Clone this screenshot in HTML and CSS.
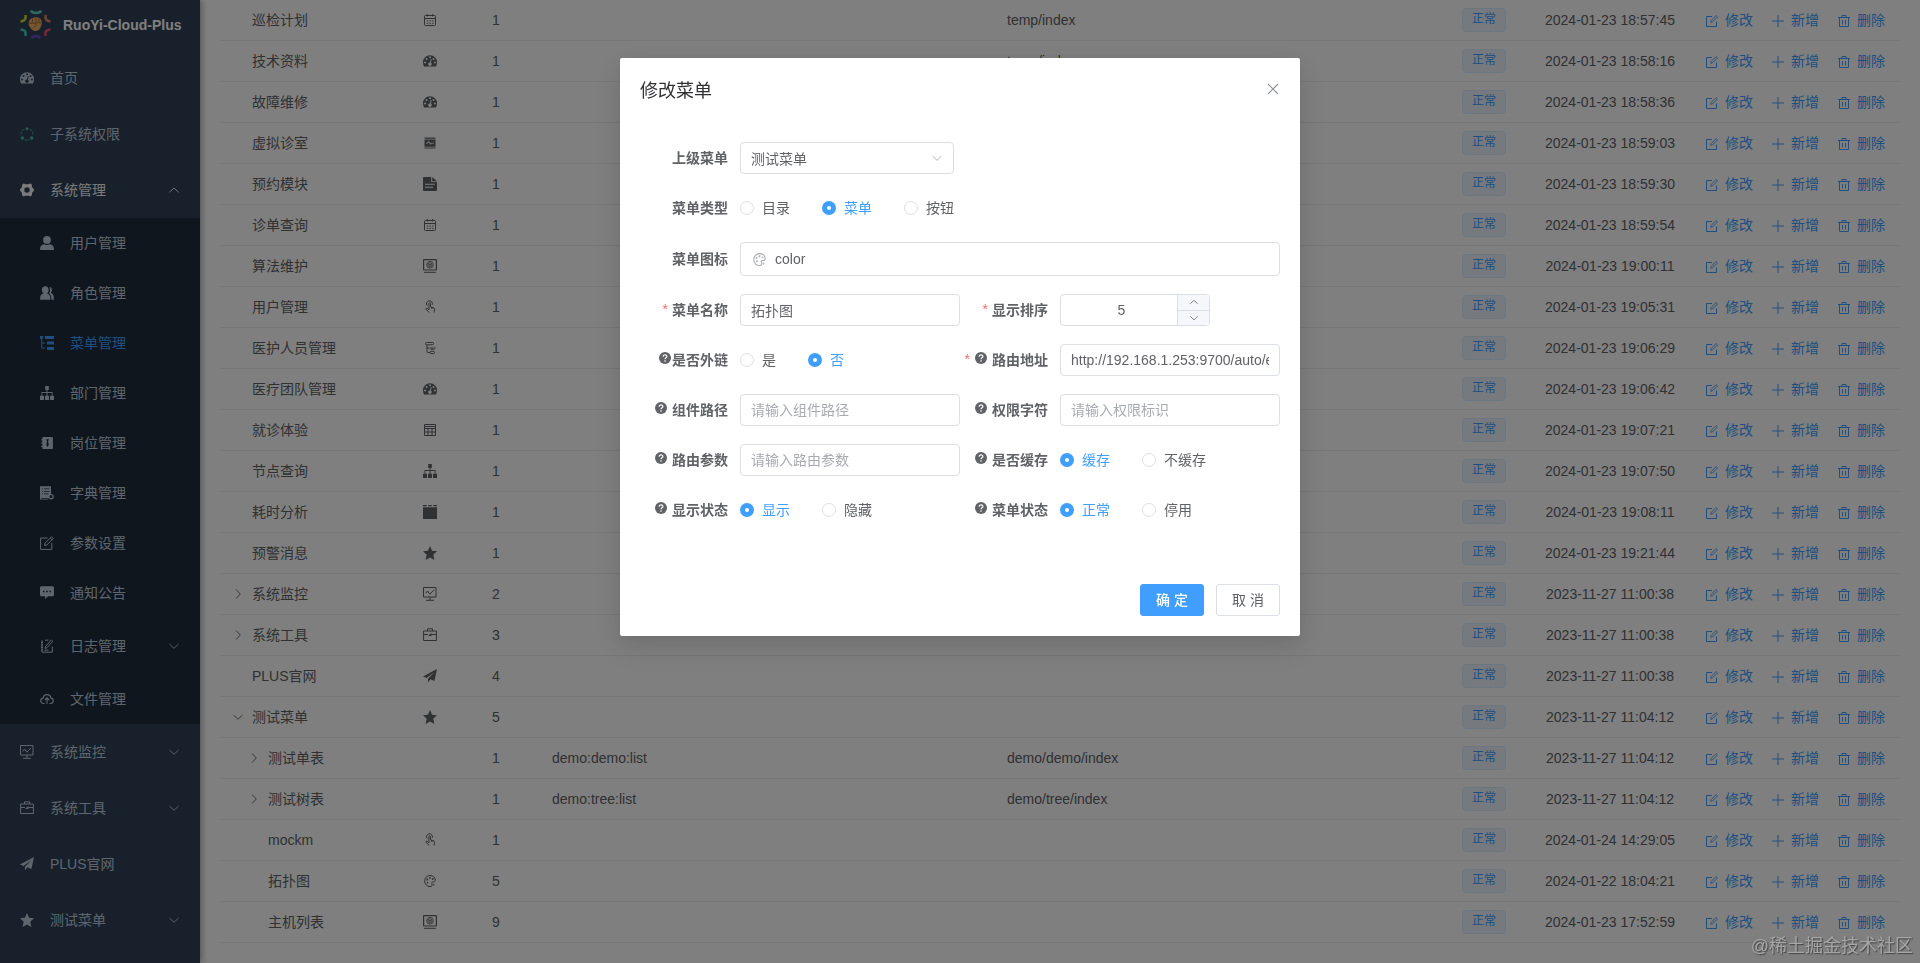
FILE: index.html
```html
<!DOCTYPE html>
<html lang="zh-CN">

<head>
    <meta charset="utf-8">
    <meta name="viewport" content="width=device-width, initial-scale=1.0">
    <title>RuoYi-Cloud-Plus</title>
    <link rel="stylesheet" href="styles.css">
</head>

<body>

    <!-- icons -->
    <svg class="sprite">
        <symbol id="i-dashboard" viewBox="0 0 14 14"><path fill="currentColor" fill-rule="evenodd" d="M7 1.3a7 7 0 0 0-7 7c0 1.600.4 2.900 1 4.100h12c.6-1.200 1-2.500 1-4.100a7 7 0 0 0-7-7zM3.600 3.900a1 1 0 1 1 0 2 1 1 0 0 1 0-2zM7 2.300a1 1 0 1 1 0 2 1 1 0 0 1 0-2zM2.100 7.500a1 1 0 1 1 0 2 1 1 0 0 1 0-2zM11.900 7.500a1 1 0 1 1 0 2 1 1 0 0 1 0-2zM10.500 3.900a1 1 0 1 1 0 2 1 1 0 0 1 0-2zM7.800 5l.9.200-.8 3.500a1.700 1.700 0 1 1-1-.3z"/></symbol>
        <symbol id="i-ring" viewBox="0 0 14 14"><g fill="none" stroke="#4fb9a0"><path d="M4.200 2.200A6 6 0 0 0 1 8.200M9.800 2.200A6 6 0 0 1 13 8.200M4.600 12.700a6 6 0 0 0 4.800 0" stroke-dasharray="2.500 .8"/></g><g fill="#4fb9a0"><circle cx="7" cy="1.700" r="1.500"/><circle cx="2.300" cy="11" r="1.700"/><circle cx="11.700" cy="11" r="1.700"/></g></symbol>
        <symbol id="i-system" viewBox="0 0 14 14"><path fill="currentColor" fill-rule="evenodd" d="M3.300.7c.9-.5 1.600.5 2.400.5h2.600c.8 0 1.500-1 2.400-.5.9.5 1.500 1 1.300 2.200-.1.800 0 1.200.5 1.900.6.700 1.500 1 1.500 2.200s-.9 1.500-1.500 2.200c-.5.700-.6 1.100-.5 1.900.2 1.200-.4 1.700-1.300 2.200-.9.500-1.600-.5-2.400-.5H5.700c-.8 0-1.500 1-2.400.5C2.400 12.800 1.800 12.300 2 11.100c.1-.8 0-1.200-.5-1.900C.9 8.500 0 8.200 0 7s.9-1.500 1.500-2.200C2 4.100 2.100 3.700 2 2.900 1.800 1.700 2.400 1.200 3.300.7zM7 4.300a2.700 2.700 0 1 0 0 5.400 2.700 2.700 0 0 0 0-5.400z"/></symbol>
        <symbol id="i-user" viewBox="0 0 14 14"><path fill="currentColor" d="M7 0a3.800 3.800 0 0 1 0 7.800A3.800 3.800 0 0 1 7 0zM0 13.500c0-3.200 1.500-5 4.200-5.200 1.800 1 3.800 1 5.600 0 2.700.2 4.200 2 4.200 5.200 0 .3-.2.500-.5.500H.5a.5.5 0 0 1-.5-.5z"/></symbol>
        <symbol id="i-peoples" viewBox="0 0 14 14"><path fill="currentColor" d="M5.300.2c2 0 3.400 1.600 3.400 3.600 0 1.400-.7 2.900-1.700 3.700 2 .6 3.300 2 3.300 4v2.200H.2v-2.300c0-2 1.200-3.400 3.300-3.900C2.500 6.700 1.800 5.200 1.800 3.800 1.800 1.800 3.300.2 5.300.2zM9.400 1.100c1.600 0 2.500 1.200 2.500 2.700 0 1.200-.4 2.300-1.200 3 1.900.8 3.100 2.600 3.100 4.600v2.300h-2.500v-2.300c0-1.800-.8-3.200-2.200-4 1.200-1.800 1.400-4.400.3-6.300z"/></symbol>
        <symbol id="i-treetable" viewBox="0 0 14 14"><path fill="currentColor" d="M0 0h3.200v2.800H2.200v3.700h3v1h-3v4h3v1H1.200V2.800H0zM5 0h9v2.900H5zM7 5.500h7v3H7zM7 11h7v3H7z"/></symbol>
        <symbol id="i-tree" viewBox="0 0 14 14"><path fill="currentColor" d="M5.200 0h3.600v4H7.500v2h5v3.800H14V14h-4V9.800h1.700V6.900H7.500v2.900H9V14H5V9.800h1.500V6.900H2.300v2.900H4V14H0V9.800h1.500V6h5V4H5.200z"/></symbol>
        <symbol id="i-post" viewBox="0 0 14 14"><path fill="currentColor" fill-rule="evenodd" d="M3.500 1h8.300c.6 0 1.100.5 1.100 1.100v9.800c0 .6-.5 1.100-1.100 1.100H3.500c-.7 0-1.200-.5-1.200-1.100v-1H1.200v-1h1.100V7.500H1.200v-1h1.100V4.200H1.200v-1h1.100V2.100C2.300 1.500 2.800 1 3.500 1zM6.300 3.200v1l.8.500-.8 4.400L7.500 11l1.300-1.900L8 4.700l.8-.5v-1z"/></symbol>
        <symbol id="i-dict" viewBox="0 0 14 14"><path fill="currentColor" fill-rule="evenodd" d="M0 .3h11v7.600c1.600 0 2.900 1.200 2.900 2.800s-1.300 2.700-2.900 2.700c-1 0-1.800-.4-2.300-1.100H1.200v.6h7v.7H0zM2 2.500v.8h1v-.8zM4 2.500v.8h5.500v-.8zM2 5v.8h1V5zM4 5v.8h5.500V5zM2 7.500v.8h1v-.8zM4 7.500v.8h4.500v-.8zM11 9a1.600 1.600 0 1 0 0 3.200A1.600 1.600 0 0 0 11 9z"/></symbol>
        <symbol id="i-edit" viewBox="0 0 14 14"><g fill="none" stroke="currentColor"><path d="M7.500 2H.6v11.400h11.200V7"/><path d="M4.500 9.600l.6-2.600L11.500.8l1.800 1.700L7 8.900zM10.300 2l1.800 1.700"/></g></symbol>
        <symbol id="i-message" viewBox="0 0 14 14"><path fill="currentColor" fill-rule="evenodd" d="M1.500.2h11c.8 0 1.500.6 1.500 1.500v7.100c0 .9-.7 1.500-1.500 1.500H8l-2.800 3v-3H1.500C.7 10.300 0 9.700 0 8.800V1.700C0 .8.700.2 1.500.2zM3 4.800v1.400h1.500V4.800zM6.300 4.800v1.400h1.500V4.800zM9.500 4.800v1.400H11V4.800z"/></symbol>
        <symbol id="i-log" viewBox="0 0 14 14"><g fill="none" stroke="currentColor"><path d="M8.500 1.200H5M2 1.200v12h10.300V7.500" /><path d="M5 9.500l.5-2L11.300 1l1.500 1.300L7 8.700zM4.500 11.200h4"/><path d="M1 3.500h2M1 6h2M1 8.500h2M1 11h2"/></g></symbol>
        <symbol id="i-upload" viewBox="0 0 14 14"><g fill="none" stroke="currentColor" stroke-width="1.100"><path d="M4.500 11.500H3.600C1.900 11.500.7 10.300.7 8.800.7 7.400 1.700 6.300 3.100 6.100 3.400 3.900 5 2.600 7 2.600s3.600 1.300 3.900 3.500c1.400.2 2.400 1.300 2.400 2.700 0 1.500-1.200 2.700-2.900 2.700h-.9"/><path d="M7 11.800V6M4.800 8L7 5.800 9.200 8"/></g></symbol>
        <symbol id="i-monitor" viewBox="0 0 14 14"><g fill="none" stroke="currentColor"><path d="M.5.500h12.500v9.500H.5zM7 10v3M3 13.300h8M2.800 6.300L4.500 4l2.300 3.200L11 2.800"/></g></symbol>
        <symbol id="i-tool" viewBox="0 0 14 14"><g fill="none" stroke="currentColor"><path d="M.6 3h12.800v9.500H.6zM4.500 3V.8h5V3M.6 6.500H5M9 6.500h4.400M5.500 7.800l2.700-2M8.300 5.500v2H6"/></g></symbol>
        <symbol id="i-guide" viewBox="0 0 14 14"><path fill="currentColor" d="M14 0l-2.600 12-4-1.800L5 13.300V9.800L11.500 3 3.600 9 0 7.500zM5.500 11l1 .5-.9 1.200z"/></symbol>
        <symbol id="i-star" viewBox="0 0 14 14"><path fill="currentColor" d="M7 0l2.100 4.700 4.900.6-3.700 3.400L11.400 14 7 11.400 2.600 14l1.100-5.300L0 5.300l4.900-.6z"/></symbol>
        <symbol id="i-date" viewBox="0 0 14 14"><g fill="none" stroke="currentColor"><rect x="1.500" y="2.500" width="11" height="10" rx="1"/><path d="M1.500 5.500h11M4.300 1v2.500M9.700 1v2.500"/><path d="M3.800 8h7M3.800 10.300h7" stroke-dasharray="1.400 1.300"/></g></symbol>
        <symbol id="i-druid" viewBox="0 0 14 14"><path fill="currentColor" fill-rule="evenodd" d="M1.500 1.500h11v1.200h-11zM1.500 3.500h11v7.300h-11zM1.500 11.500h11v1h-11zM3 6.800v.8h1.600l1.200-1.200 1.900 2.300 1.300-1.200h2v-.8H8.700l-.9.800-2-2.500-1.500 1.800z"/></symbol>
        <symbol id="i-doc" viewBox="0 0 14 14"><path fill="currentColor" fill-rule="evenodd" d="M1 0h7.200v5H14v8c0 .6-.4 1-1 1H1c-.6 0-1-.4-1-1V1c0-.6.4-1 1-1zM9.200.1L14 4.200H9.200zM2 6.800v1h9.800v-1zM2 9.800v1h8v-1z"/></symbol>
        <symbol id="i-server" viewBox="0 0 14 14"><g fill="none" stroke="currentColor"><rect x=".6" y=".6" width="12.800" height="10.400" rx=".5" stroke-width="1.200"/><circle cx="7" cy="5.800" r="3.400" stroke-width=".8"/><path stroke-width=".8" d="M7 3.500l2 1.200v2.200L7 8.100 5 6.900V4.700zM5 4.700l2 1.200 2-1.200M7 5.900v2.200"/><path d="M1 13.300h12"/></g></symbol>
        <symbol id="i-button" viewBox="0 0 14 14"><g fill="none" stroke="currentColor"><path d="M4 5.500A3 3 0 1 1 9.300 4.800"/><path d="M5.900 9.800V3.500c0-1 1.600-1 1.600 0v3.300l3.200 1c.8.300 1 .9.900 1.600l-.5 3.100M5.900 9.800L4 8.300c-.8-.5-1.500.3-.9 1L6 12.500M8.500 7.200v1.500M10 7.700v1.200"/></g></symbol>
        <symbol id="i-cascader" viewBox="0 0 14 14"><g fill="none" stroke="currentColor"><rect x="2.500" y="1.500" width="8" height="2.300" rx="1"/><path d="M4 3.800v6.700c0 .6.400 1 1 1h2M4 7h2.500"/><path d="M10.500 7H6.800M11.300 5.800c.8.800.8 1.600 0 2.400H7.500"/><rect x="7" y="10.300" width="4.500" height="2.300" rx="1"/></g></symbol>
        <symbol id="i-table" viewBox="0 0 14 14"><g fill="none" stroke="currentColor"><path d="M1.500 1.500h11v11h-11zM1.500 5.500h11M1.500 9h11M5 5.500v7M9 5.500v7M1.500 3.500h11"/></g></symbol>
        <symbol id="i-build" viewBox="0 0 14 14"><path fill="currentColor" d="M0 2.200h14V14H0zM0 0h3.800v1.300H0zM5.200 0h3.600v1.300H5.200zM10.200 0H14v1.300h-3.800z"/></symbol>
        <symbol id="i-color" viewBox="0 0 14 14"><g fill="none" stroke="currentColor"><path d="M7 1.500c3 0 5.300 1.900 5.300 4.500 0 1.400-.9 2-2.200 2-1.400 0-1.700.7-1.200 1.600.7 1.400.2 3-1.900 3C4 12.600 1.700 10.200 1.700 7 1.700 3.800 4 1.500 7 1.500z"/></g><g fill="currentColor"><circle cx="4.300" cy="5.500" r=".9"/><circle cx="7" cy="3.900" r=".9"/><circle cx="9.800" cy="5" r=".9"/><circle cx="4.500" cy="8.600" r=".9"/><circle cx="10.800" cy="10.800" r=".8"/></g></symbol>
        <symbol id="i-down" viewBox="0 0 12 12"><path fill="none" stroke="currentColor" stroke-width=".9" d="M1.500 4L6 8.300 10.500 4"/></symbol>
        <symbol id="i-up" viewBox="0 0 12 12"><path fill="none" stroke="currentColor" stroke-width=".9" d="M1.500 8.200L6 4l4.500 4.200"/></symbol>
        <symbol id="i-right" viewBox="0 0 12 12"><path fill="none" stroke="currentColor" stroke-width=".9" d="M4 1.500L8.300 6 4 10.500"/></symbol>
        <symbol id="i-pen" viewBox="0 0 14 14"><g fill="none" stroke="currentColor"><path d="M7 2.500H1.500v10h10V7.500"/><path d="M5.800 8.300l.3-1.800 5-5 1.400 1.400-5 5z" stroke-width=".9"/></g></symbol>
        <symbol id="i-plus" viewBox="0 0 14 14"><path fill="none" stroke="currentColor" d="M7 1v12M1 7h12"/></symbol>
        <symbol id="i-del" viewBox="0 0 14 14"><path fill="none" stroke="currentColor" d="M1 3.500h12M2.500 3.500v9h9v-9M5 3.500v-2h4v2M5.500 6v4.500M8.500 6v4.500"/></symbol>
        <symbol id="i-help" viewBox="0 0 12 12"><circle cx="6" cy="6" r="6" fill="currentColor"/><path fill="none" stroke="#fff" stroke-width="1.200" d="M4.100 4.700c0-2.500 3.800-2.400 3.800-.2C7.900 5.900 6 5.700 6 7.300"/><circle cx="6" cy="9" r=".8" fill="#fff"/></symbol>
        <symbol id="i-close" viewBox="0 0 12 12"><path fill="none" stroke="currentColor" stroke-width="1.100" d="M1 1l10 10M11 1L1 11"/></symbol>
    </svg>

    <aside class="sidebar">
        <div class="logo">
            <svg class="logo-img" viewBox="0 0 32 32">
                <g fill="none" stroke-width="2.600">
                    <path stroke="#62d3bd" d="M11 2.500c1.200 3.200 8.800 3.200 10 0"/>
                    <path stroke="#d98265" d="M25.500 7v2.500c0 2 1.500 3.500 5 4"/>
                    <path stroke="#ee4c80" d="M25.500 28v-3c0-2 1.500-3.300 5-3.500"/>
                    <path stroke="#6b49c8" d="M11.500 30.500c1-3.300 7.500-3.300 8.500 0"/>
                    <path stroke="#3fd0bd" d="M.5 21.500c3.500.2 5 1.500 5 3.500v3"/>
                    <path stroke="#c9d22e" d="M.5 13.500c3.500-.5 5-2 5-4V7"/>
                </g>
                <path fill="#eeaa62" d="M9.300 12.500c1.200-2.800 7.700-4.500 11-2 2 2.500 2 5.500.5 8.200-1 2.300-2.200 4-5 4.300-3 0-4.200-1.500-5.300-3.300C8.400 18 8 15 9.300 12.500z"/>
                <path fill="none" stroke="#8c5b2c" stroke-width=".8" d="M12.500 10.500v3.500M16 9.500v4.500M19 10v4M9 15c4 1 8-.7 12.300-.3M15 15c2 1.500 1.500 3-1.500 4.700"/>
            </svg>
            <span class="logo-title">RuoYi-Cloud-Plus</span>
        </div>
        <ul class="menu" id="menu"></ul>
    </aside>

    <main class="main">
        <table class="menu-table">
            <colgroup>
                <col class="c-name"><col class="c-icon"><col class="c-sort"><col><col>
                <col class="c-status"><col class="c-date"><col class="c-ops">
            </colgroup>
            <tbody id="rows"></tbody>
        </table>
    </main>

    <!-- edit dialog -->
    <div class="overlay">
        <section class="dialog">
            <header class="dialog-header">
                <span class="dialog-title">修改菜单</span>
                <svg class="dialog-close"><use href="#i-close"/></svg>
            </header>

            <form class="form">
                <div class="item">
                    <label class="label">上级菜单</label>
                    <div class="select">测试菜单<svg><use href="#i-down"/></svg></div>
                </div>
                <div class="item">
                    <label class="label">菜单类型</label>
                    <span class="radio">目录</span>
                    <span class="radio checked">菜单</span>
                    <span class="radio">按钮</span>
                </div>
                <div class="item item-icon">
                    <label class="label">菜单图标</label>
                    <div class="icon-input"><svg><use href="#i-color"/></svg>color</div>
                </div>
                <div class="row">
                    <div class="item">
                        <label class="label"><i>*</i>菜单名称</label>
                        <input class="input" value="拓扑图">
                    </div>
                    <div class="item">
                        <label class="label"><i>*</i>显示排序</label>
                        <div class="number">
                            <span class="number-value">5</span>
                            <span class="number-ctrl">
                                <b><svg><use href="#i-up"/></svg></b>
                                <b><svg><use href="#i-down"/></svg></b>
                            </span>
                        </div>
                    </div>
                </div>
                <div class="row">
                    <div class="item">
                        <label class="label"><svg class="help tight"><use href="#i-help"/></svg>是否外链</label>
                        <span class="radio">是</span>
                        <span class="radio checked">否</span>
                    </div>
                    <div class="item">
                        <label class="label"><i class="far">*</i><svg class="help"><use href="#i-help"/></svg>路由地址</label>
                        <input class="input" value="http://192.168.1.253:9700/auto/e">
                    </div>
                </div>
                <div class="row">
                    <div class="item">
                        <label class="label"><svg class="help"><use href="#i-help"/></svg>组件路径</label>
                        <input class="input" placeholder="请输入组件路径">
                    </div>
                    <div class="item">
                        <label class="label"><svg class="help"><use href="#i-help"/></svg>权限字符</label>
                        <input class="input" placeholder="请输入权限标识">
                    </div>
                </div>
                <div class="row">
                    <div class="item">
                        <label class="label"><svg class="help"><use href="#i-help"/></svg>路由参数</label>
                        <input class="input" placeholder="请输入路由参数">
                    </div>
                    <div class="item">
                        <label class="label"><svg class="help"><use href="#i-help"/></svg>是否缓存</label>
                        <span class="radio checked">缓存</span>
                        <span class="radio">不缓存</span>
                    </div>
                </div>
                <div class="row">
                    <div class="item">
                        <label class="label"><svg class="help"><use href="#i-help"/></svg>显示状态</label>
                        <span class="radio checked">显示</span>
                        <span class="radio">隐藏</span>
                    </div>
                    <div class="item">
                        <label class="label"><svg class="help"><use href="#i-help"/></svg>菜单状态</label>
                        <span class="radio checked">正常</span>
                        <span class="radio">停用</span>
                    </div>
                </div>
            </form>

            <footer class="dialog-footer">
                <button class="btn primary">确 定</button>
                <button class="btn">取 消</button>
            </footer>
        </section>
    </div>

    <div class="watermark">@稀土掘金技术社区</div>

    <script src="script.js"></script>
</body>

</html>
```

FILE: styles.css
```css
*,
*::before {
    box-sizing: border-box;
}

body {
    margin: 0;
    height: 100vh;
    display: flex;
    overflow: hidden;
    background: #fff;
    color: #606266;
    font-family: "Liberation Sans", "Noto Sans CJK SC", sans-serif;
    font-size: 14px;
}

svg {
    width: 14px;
    height: 14px;
    flex: none;
    display: block;
}

.sprite {
    display: none;
}

/* ---------- sidebar ---------- */

.sidebar {
    width: 200px;
    flex: none;
    background: #304156;
    color: #bfcbd9;
    box-shadow: 2px 0 6px rgba(0, 21, 41, .35);
    z-index: 1;
}

.logo {
    height: 50px;
    display: flex;
    align-items: center;
    padding: 0 0 2px 20px;
    gap: 11px;
}

.logo-img {
    width: 32px;
    height: 32px;
}

.logo-title {
    color: #fff;
    font-weight: bold;
    font-size: 14px;
    padding-top: 2px;
}

.menu {
    list-style: none;
    margin: 0;
    padding: 0;
}

.menu li {
    height: 56px;
    display: flex;
    align-items: center;
    gap: 16px;
    padding: 0 20px;
}

.menu span {
    padding-bottom: 2px;
}

.menu .sub {
    background: #1f2d3d;
    padding-left: 40px;
    height: 50px;
}

.menu .tall {
    height: 56px;
}

.menu .open {
    color: #f4f4f5;
}

.menu .active {
    color: #409eff;
}

.menu .arrow {
    width: 12px;
    height: 12px;
    margin-left: auto;
}

/* ---------- table ---------- */

.main {
    flex: 1;
    padding: 0 20px;
}

.menu-table {
    width: 100%;
    table-layout: fixed;
    border-collapse: separate;
    border-spacing: 0;
}

.c-name { width: 160px; }
.c-icon { width: 100px; }
.c-sort { width: 60px; }
.c-status { width: 80px; }
.c-date { width: 160px; }
.c-ops { width: 210px; }

.menu-table td {
    height: 41px;
    padding: 0 12px;
    border-bottom: 1px solid #ebeef5;
    white-space: nowrap;
    line-height: 23px;
}

.name {
    display: flex;
    align-items: center;
}

.name .expand {
    width: 20px;
}

.name .expand svg {
    width: 12px;
    height: 12px;
}

.name.child {
    padding-left: 16px;
}

.icon-cell svg {
    margin: 0 auto;
}

.date {
    text-align: center;
}

.tag {
    display: block;
    width: 44px;
    height: 24px;
    line-height: 21px;
    border: 1px solid #d9ecff;
    border-radius: 4px;
    background: #ecf5ff;
    color: #409eff;
    font-size: 12px;
    text-align: center;
}

.ops {
    display: flex;
    justify-content: center;
    gap: 18px;
    color: #409eff;
    padding-top: 1px;
}

.ops span {
    display: flex;
    align-items: center;
    gap: 6px;
}

/* ---------- dialog ---------- */

.overlay {
    position: fixed;
    inset: 0;
    z-index: 10;
    background: rgba(0, 0, 0, .5);
    display: flex;
    justify-content: center;
    align-items: flex-start;
    padding-top: 58px;
}

.dialog {
    width: 680px;
    height: 578px;
    padding: 20px;
    background: #fff;
    border-radius: 2px;
    box-shadow: 0 12px 32px 4px rgba(0, 0, 0, .08), 0 4px 20px rgba(0, 0, 0, .08);
    display: flex;
    flex-direction: column;
}

.dialog-header {
    display: flex;
    justify-content: space-between;
    align-items: center;
    height: 22px;
    margin-bottom: 2px;
    color: #303133;
}

.dialog-title {
    font-size: 18px;
}

.dialog-close {
    width: 12px;
    height: 12px;
    margin-right: 1px;
    color: #909399;
}

.form {
    display: flex;
    flex-direction: column;
    gap: 18px;
    padding-top: 40px;
}

.row {
    display: flex;
}

.item {
    display: flex;
    align-items: center;
    height: 32px;
    width: 320px;
}

.form > .item {
    width: 640px;
}

.form > .item-icon {
    height: 34px;
}

.label {
    width: 100px;
    flex: none;
    display: flex;
    justify-content: flex-end;
    align-items: center;
    padding: 0 12px 2px 0;
    font-weight: 700;
    white-space: nowrap;
}

.label i {
    color: #f56c6c;
    font-style: normal;
    font-weight: 400;
    margin-right: 4px;
}

.label i.far {
    margin-right: 5px;
}

.help {
    width: 12px;
    height: 12px;
    margin: 0 5px 2px 0;
}

.help.tight {
    margin-right: 1px;
}

.input,
.select,
.icon-input,
.number {
    border: 1px solid #dcdfe6;
    border-radius: 4px;
    background: #fff;
    color: #606266;
    font: inherit;
    height: 32px;
    padding: 0 10px;
}

.input {
    width: 220px;
    outline: none;
}

.input::placeholder {
    color: #a8abb2;
}

.select {
    width: 214px;
    display: flex;
    align-items: center;
    justify-content: space-between;
}

.select svg {
    width: 12px;
    height: 12px;
    color: #a8abb2;
}

.icon-input {
    flex: 1;
    height: 34px;
    display: flex;
    align-items: center;
    gap: 8px;
    padding-left: 11px;
}

.icon-input svg {
    width: 15px;
    height: 15px;
    color: #a8abb2;
}

.number {
    width: 150px;
    padding: 0;
    display: flex;
    overflow: hidden;
}

.number-value {
    flex: 1;
    text-align: center;
    line-height: 30px;
    padding-left: 5px;
}

.number-ctrl {
    width: 32px;
    border-left: 1px solid #dcdfe6;
    background: #f5f7fa;
    display: flex;
    flex-direction: column;
}

.number-ctrl b {
    flex: 1;
    display: flex;
    align-items: center;
    justify-content: center;
}

.number-ctrl b + b {
    border-top: 1px solid #dcdfe6;
}

.number-ctrl svg {
    width: 10px;
    height: 10px;
}

.radio {
    display: flex;
    align-items: center;
    gap: 8px;
    margin-right: 32px;
    white-space: nowrap;
    line-height: 20px;
    padding-bottom: 1px;
}

.radio::before {
    content: "";
    width: 14px;
    height: 14px;
    border: 1px solid #dcdfe6;
    border-radius: 50%;
    margin-top: 1px;
}

.radio.checked {
    color: #409eff;
}

.radio.checked::before {
    border: 5px solid #409eff;
}

.dialog-footer {
    margin-top: auto;
    display: flex;
    justify-content: flex-end;
    gap: 12px;
}

.btn {
    width: 64px;
    height: 32px;
    border: 1px solid #dcdfe6;
    border-radius: 3px;
    background: #fff;
    color: #606266;
    font: inherit;
    padding: 0 0 2px;
}

.btn.primary {
    background: #409eff;
    border-color: #409eff;
    color: #fff;
    font-weight: 500;
}

.watermark {
    position: fixed;
    right: 7px;
    bottom: 6px;
    z-index: 20;
    font-size: 18px;
    color: #a6a6a6;
    text-shadow: 1px 1px 1px #444;
}
```

FILE: script.js
```javascript
// sidebar: [icon, text, classes, arrow]
const menu = [
    ["dashboard", "首页", "", ""],
    ["ring", "子系统权限", "", ""],
    ["system", "系统管理", "open", "up"],
    ["user", "用户管理", "sub", ""],
    ["peoples", "角色管理", "sub", ""],
    ["treetable", "菜单管理", "sub active", ""],
    ["tree", "部门管理", "sub", ""],
    ["post", "岗位管理", "sub", ""],
    ["dict", "字典管理", "sub", ""],
    ["edit", "参数设置", "sub", ""],
    ["message", "通知公告", "sub", ""],
    ["log", "日志管理", "sub tall", "down"],
    ["upload", "文件管理", "sub", ""],
    ["monitor", "系统监控", "", "down"],
    ["tool", "系统工具", "", "down"],
    ["guide", "PLUS官网", "", ""],
    ["star", "测试菜单", "", "down"]
];

// table: [name, icon, sort, perms, component, date, expand, child]
const rows = [
    ["巡检计划", "date", 1, "", "temp/index", "2024-01-23 18:57:45"],
    ["技术资料", "dashboard", 1, "", "temp/index", "2024-01-23 18:58:16"],
    ["故障维修", "dashboard", 1, "", "", "2024-01-23 18:58:36"],
    ["虚拟诊室", "druid", 1, "", "", "2024-01-23 18:59:03"],
    ["预约模块", "doc", 1, "", "", "2024-01-23 18:59:30"],
    ["诊单查询", "date", 1, "", "", "2024-01-23 18:59:54"],
    ["算法维护", "server", 1, "", "", "2024-01-23 19:00:11"],
    ["用户管理", "button", 1, "", "", "2024-01-23 19:05:31"],
    ["医护人员管理", "cascader", 1, "", "", "2024-01-23 19:06:29"],
    ["医疗团队管理", "dashboard", 1, "", "", "2024-01-23 19:06:42"],
    ["就诊体验", "table", 1, "", "", "2024-01-23 19:07:21"],
    ["节点查询", "tree", 1, "", "", "2024-01-23 19:07:50"],
    ["耗时分析", "build", 1, "", "", "2024-01-23 19:08:11"],
    ["预警消息", "star", 1, "", "", "2024-01-23 19:21:44"],
    ["系统监控", "monitor", 2, "", "", "2023-11-27 11:00:38", "right"],
    ["系统工具", "tool", 3, "", "", "2023-11-27 11:00:38", "right"],
    ["PLUS官网", "guide", 4, "", "", "2023-11-27 11:00:38"],
    ["测试菜单", "star", 5, "", "", "2023-11-27 11:04:12", "down"],
    ["测试单表", "", 1, "demo:demo:list", "demo/demo/index", "2023-11-27 11:04:12", "right", true],
    ["测试树表", "", 1, "demo:tree:list", "demo/tree/index", "2023-11-27 11:04:12", "right", true],
    ["mockm", "button", 1, "", "", "2024-01-24 14:29:05", "", true],
    ["拓扑图", "color", 5, "", "", "2024-01-22 18:04:21", "", true],
    ["主机列表", "server", 9, "", "", "2024-01-23 17:52:59", "", true]
];

function icon(name, cls = "") {
    return name ? `<svg class="${cls}"><use href="#i-${name}"/></svg>` : "";
}

document.querySelector("#menu").innerHTML = menu.map(([ic, text, cls, arrow]) =>
    `<li class="${cls}">${icon(ic)}<span>${text}</span>${icon(arrow, "arrow")}</li>`
).join("");

document.querySelector("#rows").innerHTML = rows.map(([name, ic, sort, perms, component, date, expand, child]) => `
    <tr>
        <td><div class="name ${child ? "child" : ""}"><span class="expand">${icon(expand)}</span>${name}</div></td>
        <td class="icon-cell">${icon(ic)}</td>
        <td>${sort}</td>
        <td>${perms}</td>
        <td>${component}</td>
        <td><span class="tag">正常</span></td>
        <td class="date">${date}</td>
        <td><div class="ops">
            <span>${icon("pen")}修改</span>
            <span>${icon("plus")}新增</span>
            <span>${icon("del")}删除</span>
        </div></td>
    </tr>`
).join("");
```
